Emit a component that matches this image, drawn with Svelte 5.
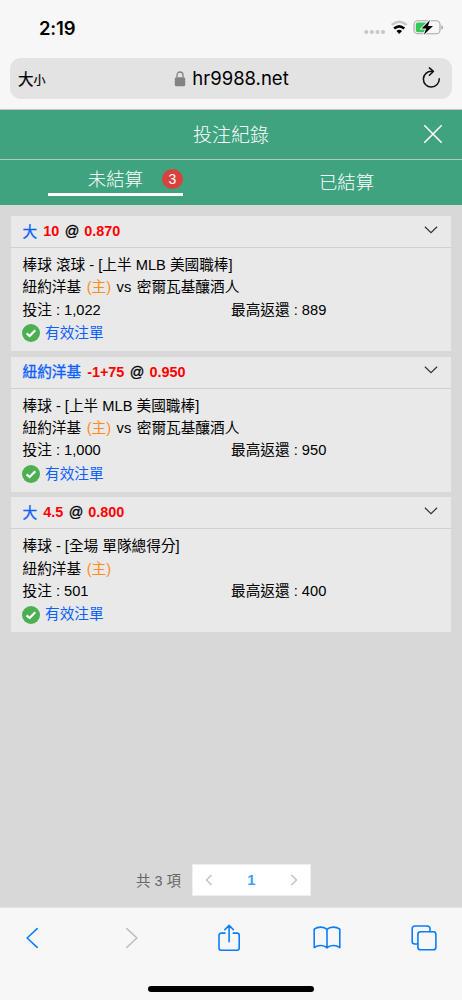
<script>
  const bets = [
    { pick: '大', line: '10', odds: '0.870', league: '棒球 滾球 - [上半 MLB 美國職棒]', home: '紐約洋基', away: '密爾瓦基釀酒人', stake: '1,022', payout: '889' },
    { pick: '紐約洋基', line: '-1+75', odds: '0.950', league: '棒球 - [上半 MLB 美國職棒]', home: '紐約洋基', away: '密爾瓦基釀酒人', stake: '1,000', payout: '950' },
    { pick: '大', line: '4.5', odds: '0.800', league: '棒球 - [全場 單隊總得分]', home: '紐約洋基', away: '', stake: '501', payout: '400' }
  ];
</script>

<div class="phone">
  <header class="browser">
    <div class="status">
      <span class="time">2:19</span>
      <svg class="indicators" width="80" height="18" viewBox="0 0 80 18">
        <g fill="#c6c6c8"><circle cx="4.3" cy="13" r="2.1"/><circle cx="9.9" cy="13" r="2.1"/><circle cx="15.5" cy="13" r="2.1"/><circle cx="21" cy="13" r="2.1"/></g>
        <path d="M29.7 5.9Q37.2-.5 44.8 5.9" fill="none" stroke="#c6c6c8" stroke-width="2.4"/>
        <path d="M32.2 9.5Q37.2 5.1 42.3 9.5" fill="none" stroke="#000" stroke-width="2.6"/>
        <path d="M34.5 11.9Q37.2 9.8 40 11.9L37.2 15Z"/>
        <rect x="52" y="1.8" width="26" height="13" rx="3.8" fill="none" stroke="#a9a9ab" stroke-width="1.1"/>
        <rect x="53.8" y="3.6" width="12.2" height="9.6" rx="2" fill="#35c759"/>
        <path d="M79.3 6.2q1.8.5 1.8 2.2t-1.8 2.2Z" fill="#a9a9ab"/>
        <path d="M68 .9L59.6 9.6H64.2L61.9 15.8 71 7H66Z" stroke="#f7f7f7" stroke-width="1.8" paint-order="stroke"/>
      </svg>
    </div>
    <div class="address">
      <span class="size">大<small>小</small></span>
      <span class="domain">
        <svg width="12" height="16" viewBox="0 0 12 16"><rect x=".8" y="6.3" width="10.4" height="8.9" rx="1.5" fill="#838387"/><path d="M3 6.5V4a3 3 0 0 1 6 0V6.5" fill="none" stroke="#838387" stroke-width="1.3"/></svg>
        hr9988.net
      </span>
      <svg class="reload" width="20" height="22" viewBox="0 0 20 22" fill="none" stroke="#111" stroke-width="1.5" stroke-linecap="round" stroke-linejoin="round"><path d="M10.8 4.3A7.9 7.9 0 1 0 18.2 11.8M8.4.9l4 3.5-4 3.8"/></svg>
    </div>
  </header>

  <div class="title">
    <span></span>
    <h1>投注紀錄</h1>
    <svg width="20" height="20" viewBox="0 0 20 20" stroke="#fff" stroke-width="1.6" stroke-linecap="round"><path d="M1.8 1.8 18.2 18.2M18.2 1.8 1.8 18.2"/></svg>
  </div>
  <nav class="tabs">
    <div class="tab active"><div class="label"><span>未結算</span><b>3</b></div></div>
    <div class="tab">已結算</div>
  </nav>

  <main>
    <div class="cards">
      {#each bets as bet}
        <article>
          <div class="head">
            <span class="pick">{bet.pick}</span><span class="num">{bet.line}</span><span class="at">@</span><span class="num odds">{bet.odds}</span>
            <svg class="chevron" width="14" height="8" viewBox="0 0 14 8" fill="none" stroke="#333" stroke-width="1.2"><path d="M.9.8 7 6.7 13.1.8"/></svg>
          </div>
          <div class="body">
            <div class="row">{bet.league}</div>
            <div class="row match"><span>{bet.home}</span><span class="host">(主)</span>{#if bet.away}<span>vs</span><span>{bet.away}</span>{/if}</div>
            <div class="row amounts"><span>投注 : {bet.stake}</span><span>最高返還 : {bet.payout}</span></div>
            <div class="row valid">
              <svg width="18" height="18" viewBox="0 0 18 18"><circle cx="9" cy="9" r="9" fill="#4caf50"/><path d="M4.6 9.4 7.6 12 13.3 6.2" fill="none" stroke="#fff" stroke-width="2.3"/></svg>
              <span>有效注單</span>
            </div>
          </div>
        </article>
      {/each}
    </div>
    <div class="pagination">
      <span class="total">共 3 項</span>
      <div class="pager">
        <svg width="8" height="12" viewBox="0 0 8 12"><path d="M6.6 1 1.5 6l5.1 5"/></svg>
        <b>1</b>
        <svg width="8" height="12" viewBox="0 0 8 12"><path d="M1.4 1l5.1 5-5.1 5"/></svg>
      </div>
    </div>
  </main>

  <footer>
    <div class="tools">
      <svg width="14" height="22" viewBox="0 0 14 22"><path d="M12.2 1.7 2.1 11l10.1 9.3"/></svg>
      <svg class="disabled" width="14" height="22" viewBox="0 0 14 22"><path d="M1.8 1.7 11.9 11 1.8 20.3"/></svg>
      <svg width="24" height="28" viewBox="0 0 24 28"><path d="M8 9.1H4.2A2.2 2.2 0 0 0 2 11.3V24a2.2 2.2 0 0 0 2.2 2.2H20a2.2 2.2 0 0 0 2.2-2.2V11.3A2.2 2.2 0 0 0 20 9.1h-3.8M12.1 17.8V1.5M7.8 5.7l4.3-4.3 4.3 4.3"/></svg>
      <svg width="28" height="24" viewBox="0 0 28 24"><path d="M14 3.4C11 .4 4.8.5 1.2 3.2V21.6C5 18.8 11 18.9 14 21.9 17 18.9 23 18.8 26.8 21.6V3.2C23.2.5 17 .4 14 3.4ZM14 3.4V21.9"/></svg>
      <svg width="26" height="26" viewBox="0 0 26 26"><path d="M6.8 19H3.7a2.5 2.5 0 0 1-2.5-2.5V3.5A2.5 2.5 0 0 1 3.7 1h12.8A2.5 2.5 0 0 1 19 3.5V6.7"/><rect x="6.9" y="6.8" width="18" height="18" rx="2.6"/></svg>
    </div>
    <div class="home"></div>
  </footer>
</div>

<style>
  :global(body) { background: #f7f7f7; }
  .phone { width: 462px; height: 1000px; display: flex; flex-direction: column; overflow: hidden; background: #f7f7f7; color: #000; font-family: "Liberation Sans", "Noto Sans CJK TC", sans-serif; font-size: 14.67px; }
  .phone, .phone * { box-sizing: border-box; }
  svg { display: block; flex: none; }
  .browser { height: 110px; border-bottom: 1px solid #c6c6c8; }
  .status { height: 58px; display: flex; justify-content: space-between; padding: 15px 20px 0 39px; }
  .time { font: 600 18.5px/26px Inter, sans-serif; letter-spacing: -.2px; }
  .indicators { margin-top: 4px; overflow: visible; }
  .address { height: 41px; margin: 0 10px; padding: 0 11px 0 8px; border-radius: 11px; background: #e3e3e4; display: grid; grid-template-columns: 102px 1fr 98px; align-items: center; }
  .size { font: 400 15.5px/24px "Noto Sans CJK TC", sans-serif; -webkit-text-stroke: .25px #000; }
  .size small { font-size: 12px; }
  .domain { display: flex; justify-content: center; gap: 6px; font: 18.5px/24px Inter, sans-serif; white-space: nowrap; padding-bottom: 2px; }
  .domain svg { margin-top: 5px; }
  .reload { justify-self: end; margin-top: -2px; }
  .title { height: 50px; display: grid; grid-template-columns: 20px 1fr 20px; align-items: center; padding: 0 19px; background: #40a380; color: #fff; border-bottom: 1px solid #b9c9bf; }
  h1 { margin: -2px 0 0; text-align: center; font: 300 19px/28px "Noto Sans CJK TC", sans-serif; }
  .title svg { margin-top: -2px; }
  .tabs { height: 45px; display: grid; grid-template-columns: 1fr 1fr; background: #40a380; color: #fff; font: 300 18.4px/26px "Noto Sans CJK TC", sans-serif; }
  .tab { display: flex; justify-content: center; padding-top: 8px; }
  .active { padding-top: 5px; }
  .label { width: 135px; height: 31px; border-bottom: 3px solid #fff; display: flex; justify-content: flex-end; gap: 19px; }
  .label b { width: 21px; height: 20px; margin-top: 4px; border-radius: 50%; background: #d9413d; text-align: center; font: 14px/20px "Liberation Sans", sans-serif; }
  main { height: 702px; display: flex; flex-direction: column; justify-content: space-between; background: #d8d8d8; padding: 11px; }
  .cards { display: flex; flex-direction: column; gap: 5.7px; }
  article { height: 135px; background: #e9e9e9; }
  .head { height: 32px; display: flex; align-items: center; border-bottom: 1px solid #d0d0d0; padding: 0 13px 1px 11.5px; font-weight: 700; font-size: 14.4px; }
  .pick { color: #0a60ff; font-weight: 400; font-size: 14.67px; margin-top: -2px; -webkit-text-stroke: .3px #0a60ff; }
  .num { color: #f00; margin-left: 6px; }
  .at { margin-left: 5.5px; font-weight: 400; -webkit-text-stroke: .3px #000; }
  .odds { margin-left: 5px; }
  .chevron { margin-left: auto; margin-top: -3px; }
  .body { padding: 6px 11.5px 0; }
  .row { height: 22.4px; line-height: 22.4px; white-space: nowrap; }
  .match { display: flex; gap: 5.5px; }
  .host { color: #ff8c1a; }
  .amounts { display: grid; grid-template-columns: 208.5px 1fr; }
  .valid { display: flex; align-items: center; gap: 5px; height: 24px; color: #0a60ff; }
  .valid svg { margin-left: -.5px; }
  .pagination { display: flex; align-items: center; justify-content: center; gap: 11px; height: 32px; padding-right: 15px; }
  .total { color: #666; font-size: 14.4px; margin-top: -2px; }
  .pager { width: 119px; height: 32px; padding: 0 12px; display: flex; align-items: center; justify-content: space-between; background: #fff; border: 1px solid #efefef; color: #409eff; }
  .pager svg { fill: none; stroke: #c0c4cc; stroke-width: 1.5; }
  footer { height: 93px; border-top: 1px solid #e3e3e3; background: #f7f7f7; }
  .tools { height: 60px; display: grid; grid-template-columns: 64px 136px 58px 137px 58px; justify-items: center; align-items: center; }
  .tools svg { fill: none; stroke: #0a7cff; stroke-width: 1.6; stroke-linecap: round; stroke-linejoin: round; }
  .tools .disabled { stroke: #bfbfbf; }
  .home { width: 166px; height: 6px; margin: 18px auto 0; border-radius: 3px; background: #000; }
</style>
